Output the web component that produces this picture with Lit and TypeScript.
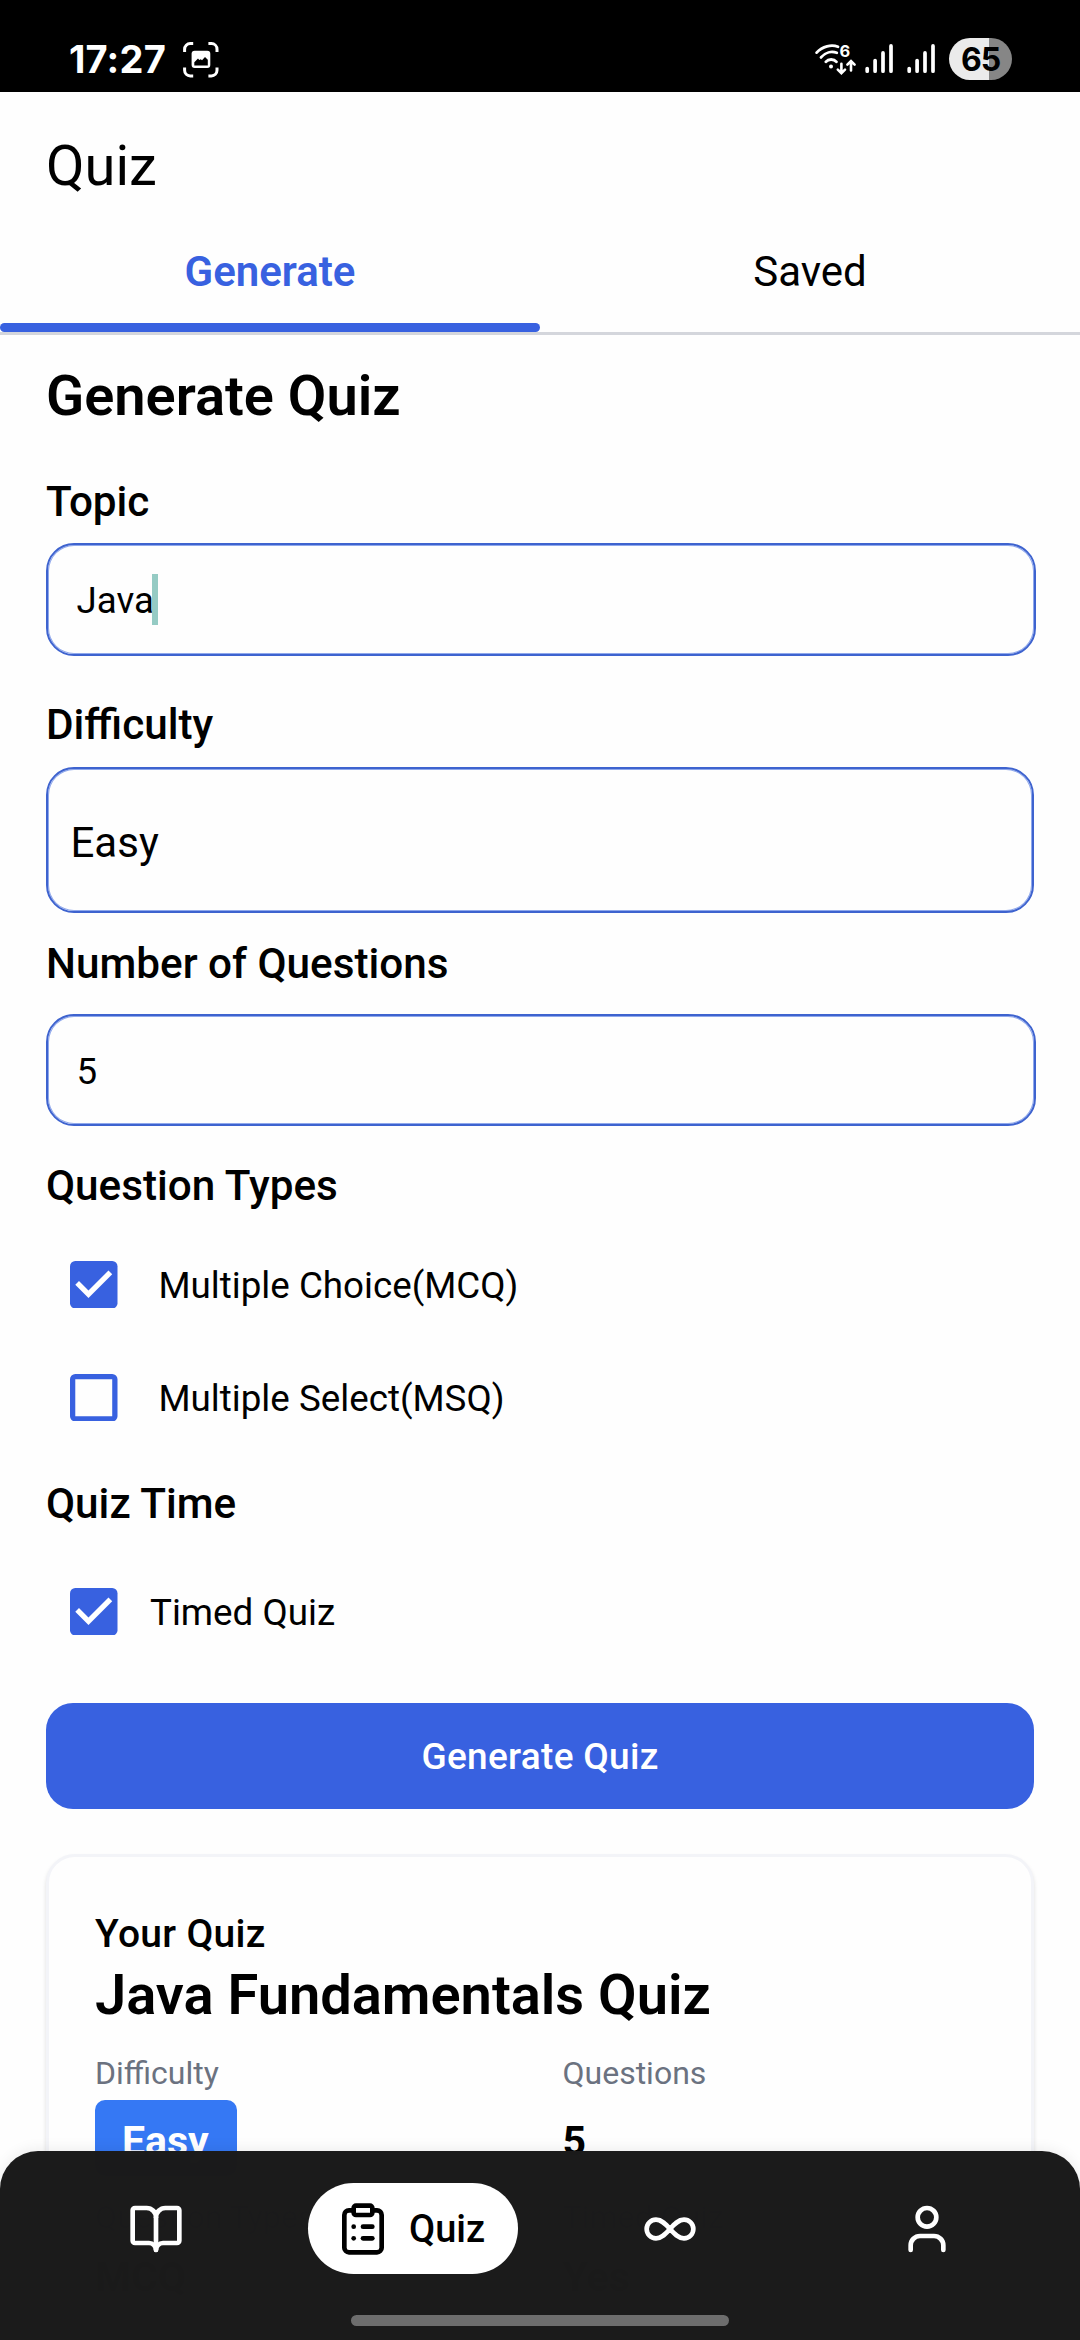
import { LitElement, html, css, svg } from "lit";
import { customElement, property, state } from "lit/decorators.js";
import { classMap } from "lit/directives/class-map.js";

const bookIcon = svg`<path d="M12 7v14"/><path d="M3 18a1 1 0 0 1-1-1V4a1 1 0 0 1 1-1h5a4 4 0 0 1 4 4 4 4 0 0 1 4-4h5a1 1 0 0 1 1 1v13a1 1 0 0 1-1 1h-6a3 3 0 0 0-3 3 3 3 0 0 0-3-3z"/>`;
const clipboardIcon = svg`<rect width="8" height="4" x="8" y="2" rx="1" ry="1"/><path d="M16 4h2a2 2 0 0 1 2 2v14a2 2 0 0 1-2 2H6a2 2 0 0 1-2-2V6a2 2 0 0 1 2-2h2"/><path d="M12 11h4"/><path d="M12 16h4"/><path d="M8 11h.01"/><path d="M8 16h.01"/>`;
const infinityIcon = svg`<path d="M6 16c5 0 7-8 12-8a4 4 0 0 1 0 8c-5 0-7-8-12-8a4 4 0 1 0 0 8"/>`;
const userIcon = svg`<path d="M19 21v-2a4 4 0 0 0-4-4H9a4 4 0 0 0-4 4v2"/><circle cx="12" cy="7" r="4"/>`;

@customElement("status-bar")
class StatusBar extends LitElement {
  static styles = css`
    :host {
      display: flex;
      align-items: flex-start;
      height: 92px;
      box-sizing: border-box;
      padding: 38px 68px 0 69px;
      background: #000;
      color: #fff;
      font-family: Inter, Roboto, sans-serif;
    }
    svg { display: block; flex: none; overflow: visible; }
    .time { font-size: 38px; font-weight: 700; line-height: 42px; width: 114px; letter-spacing: 0.2px; }
    .capture { margin-top: 4px; }
    .wifi { margin: 6px 9px 0 auto; }
    .bars { margin: 6px 14px 0 0; }
    .battery {
      width: 63px;
      height: 42px;
      border-radius: 21px;
      background: linear-gradient(90deg, #ebebeb 40px, #868686 40px);
      color: #000;
      font-size: 32px;
      font-weight: 700;
      line-height: 43px;
      text-align: center;
      letter-spacing: -1px;
    }
  `;

  private bars() {
    return html`<svg class="bars" width="28" height="30" viewBox="0 0 28 30" stroke="#fff" stroke-width="3.7" stroke-linecap="round">
      <path d="M2.2 24.6v2.6M10.1 16.6v10.6M18 8.9v18.3M26 1.9v25.3"/>
    </svg>`;
  }

  render() {
    return html`
      <div class="time">17:27</div>
      <svg class="capture" width="36" height="36" viewBox="0 0 36 36" fill="none">
        <path d="M1.6 10V7.2A5.6 5.6 0 0 1 7.2 1.6h3M25.4 1.6h3a5.6 5.6 0 0 1 5.6 5.6V10M34 25.5v2.8a5.6 5.6 0 0 1-5.6 5.6h-3M10.2 33.9h-3a5.6 5.6 0 0 1-5.6-5.6v-2.8" stroke="#fff" stroke-width="3"/>
        <rect x="8.6" y="8.8" width="18.7" height="17.2" rx="3" fill="#fff"/>
        <path d="M11.3 23.4v-3.2l3.7-3.6 1.3 1.3 1.5-.6 1.2 1 3-3.2 2.8 2.6v5.7z" fill="#000"/>
      </svg>
      <svg class="wifi" width="41" height="31" viewBox="0 0 41 31" fill="none" stroke="#fff" stroke-width="2.8" stroke-linecap="round">
        <path d="M1.6 8.6C7.4 2.2 16.5 0.2 23 2.8"/>
        <path d="M6 13.4C10.2 8.4 16.5 6.8 21.8 8.8"/>
        <path d="M10.8 17.8C13.5 14.7 18.8 14.7 21.5 17.8"/>
        <circle cx="16" cy="22.6" r="2" fill="#fff" stroke="none"/>
        <path d="M26.4 19.8v9M22.8 25.6l3.6 3.6 3.6-3.6M36 26.5v-9M32.4 20.6l3.6-3.6 3.6 3.6" stroke-width="2.6"/>
        <text x="24.4" y="12.8" font-size="16.5" font-weight="700" fill="#fff" stroke="none">6</text>
      </svg>
      ${this.bars()}${this.bars()}
      <div class="battery">65</div>
    `;
  }
}

@customElement("check-row")
class CheckRow extends LitElement {
  @property() label = "";
  @property({ type: Boolean }) checked = false;

  static styles = css`
    :host { display: flex; align-items: center; height: 49px; gap: var(--gap, 41px); padding-left: 24px; }
    svg { display: block; flex: none; }
    .label { font-size: 36.75px; line-height: 48px; padding-top: 2px; white-space: nowrap; }
  `;

  render() {
    return html`
      <svg width="47.5" height="47.5" viewBox="3 3 18 18">
        ${this.checked
          ? svg`<rect x="3" y="3" width="18" height="18" rx="2" fill="#3861e0"/><path d="M10 17l-5-5 1.41-1.41L10 14.17l7.59-7.59L19 8z" fill="#fff"/>`
          : svg`<rect x="4" y="4" width="16" height="16" rx="1" fill="none" stroke="#3861e0" stroke-width="2"/>`}
      </svg>
      <span class="label">${this.label}</span>
    `;
  }
}

@customElement("bottom-nav")
class BottomNav extends LitElement {
  static styles = css`
    :host {
      display: flex;
      flex-direction: column;
      height: 189px;
      box-sizing: border-box;
      padding: 31.5px 24.5px 14px 27.5px;
      background: rgba(26, 26, 26, 0.995);
      border-radius: 38px 38px 0 0;
      box-shadow: 0 -2px 14px rgba(0, 0, 0, 0.07);
      color: #fff;
    }
    .items { display: grid; grid-template-columns: repeat(4, 1fr); height: 92px; }
    .item { display: flex; align-items: center; justify-content: center; }
    .pill {
      display: flex;
      align-items: center;
      height: 91px;
      width: 210px;
      box-sizing: border-box;
      padding-left: 27px;
      gap: 18px;
      border-radius: 46px;
      background: #fff;
      color: #000;
      font-size: 38px;
      font-weight: 500;
    }
    svg { display: block; flex: none; }
    .handle { width: 378px; height: 11px; border-radius: 6px; background: #6d6d6d; margin: auto auto 0 323.5px; }
  `;

  private icon(shape: unknown) {
    return html`<svg width="56" height="56" viewBox="0 0 24 24" fill="none" stroke="currentColor" stroke-width="2" stroke-linecap="round" stroke-linejoin="round">${shape}</svg>`;
  }

  render() {
    return html`
      <div class="items">
        <div class="item">${this.icon(bookIcon)}</div>
        <div class="item"><div class="pill">${this.icon(clipboardIcon)}<span>Quiz</span></div></div>
        <div class="item">${this.icon(infinityIcon)}</div>
        <div class="item">${this.icon(userIcon)}</div>
      </div>
      <div class="handle"></div>
    `;
  }
}

@customElement("app-root")
class AppRoot extends LitElement {
  @state() private tab = "Generate";

  static styles = css`
    :host {
      display: block;
      position: relative;
      width: 1080px;
      height: 2340px;
      overflow: hidden;
      background: #fefefe;
      color: #000;
      font-family: Roboto, sans-serif;
    }
    .title { font-size: 56px; line-height: 66px; padding: 41px 46px 0; }
    .tabs { display: grid; grid-template-columns: 1fr 1fr; height: 136px; box-sizing: border-box; border-bottom: 3px solid #d4d6dc; }
    .tab { display: flex; flex-direction: column; justify-content: space-between; padding-top: 48px; text-align: center; font-size: 42px; line-height: 50px; }
    .tab.active { color: #3861e0; font-weight: 600; }
    .tab.active::after { content: ""; height: 9px; border-radius: 5px; background: #3861e0; }
    .content { padding: 28px 46px 0; }
    .heading { font-size: 56px; line-height: 66px; font-weight: 600; }
    .label { font-size: 42.25px; line-height: 50px; font-weight: 500; }
    .field {
      display: flex;
      align-items: center;
      box-sizing: border-box;
      border: 2px solid #3e63cf;
      box-shadow: inset 0 0 0 1px #8fa8ec;
      border-radius: 28px;
      font-size: 36.7px;
      line-height: 44px;
    }
    .input { width: 990px; padding-left: 28.5px; }
    .input .text { padding-top: 3px; }
    .caret { width: 6px; height: 51px; background: #95cbc4; margin-left: -1.5px; }
    .select { height: 146px; font-size: 42px; padding-left: 22.5px; padding-top: 6px; }
    .topic { margin-top: 48px; }
    .topic-field { height: 113px; margin-top: 16px; }
    .difficulty { margin-top: 44px; }
    .difficulty-field { margin-top: 17px; }
    .count { margin-top: 26px; }
    .count-field { height: 112px; margin-top: 25px; }
    .types { margin-top: 35px; }
    .mcq { margin-top: 49px; }
    .msq { margin-top: 64px; }
    .time { margin-top: 57px; }
    .timed { margin-top: 58px; --gap: 32.5px; }
    .submit {
      display: flex;
      align-items: center;
      justify-content: center;
      height: 106px;
      margin-top: 67px;
      border-radius: 27px;
      background: #3861e0;
      color: #fff;
      font-size: 37px;
      font-weight: 500;
      letter-spacing: 0.3px;
    }
    .card {
      height: 600px;
      box-sizing: border-box;
      margin-top: 45px;
      padding: 53px 46px 0;
      border: 3px solid #f3f4f8;
      border-radius: 29px;
      background: #fefefe;
      box-shadow: 0 3px 4px rgba(0, 0, 0, 0.13);
    }
    .eyebrow { font-size: 39px; line-height: 46px; font-weight: 500; letter-spacing: 0.3px; padding-top: 1px; }
    .name { font-size: 56px; line-height: 66px; font-weight: 600; margin-top: 5px; }
    .facts { display: grid; grid-template-columns: 467.5px 1fr; margin-top: 26px; }
    .fact { display: flex; flex-direction: column; align-items: flex-start; height: 144px; }
    .key { font-size: 32px; line-height: 38px; color: #6b7280; }
    .value { font-size: 41px; line-height: 50px; font-weight: 700; margin-top: 8px; padding-top: 16px; }
    .badge { padding: 16px 28px 10px 27px; border-radius: 10px; background: #3578f4; color: #fff; }
    .low { padding-top: 8px; }
    .nav { position: absolute; left: 0; right: 0; bottom: 0; }
  `;

  private fact(key: string, value: string, kind = "") {
    return html`<div class="fact">
      <span class="key">${key}</span>
      <span class=${classMap({ value: true, badge: kind === "badge", low: kind === "low" })}>${value}</span>
    </div>`;
  }

  render() {
    return html`
      <status-bar></status-bar>
      <div class="title">Quiz</div>
      <div class="tabs">
        ${["Generate", "Saved"].map(
          (t) => html`<div class=${classMap({ tab: true, active: t === this.tab })} @click=${() => (this.tab = t)}>${t}</div>`
        )}
      </div>
      <div class="content">
        <div class="heading">Generate Quiz</div>
        <div class="label topic">Topic</div>
        <div class="field input topic-field"><span class="text">Java</span><span class="caret"></span></div>
        <div class="label difficulty">Difficulty</div>
        <div class="field select difficulty-field">Easy</div>
        <div class="label count">Number of Questions</div>
        <div class="field input count-field"><span class="text">5</span></div>
        <div class="label types">Question Types</div>
        <check-row class="mcq" label="Multiple Choice(MCQ)" checked></check-row>
        <check-row class="msq" label="Multiple Select(MSQ)"></check-row>
        <div class="label time">Quiz Time</div>
        <check-row class="timed" label="Timed Quiz" checked></check-row>
        <div class="submit">Generate Quiz</div>
        <div class="card">
          <div class="eyebrow">Your Quiz</div>
          <div class="name">Java Fundamentals Quiz</div>
          <div class="facts">
            ${this.fact("Difficulty", "Easy", "badge")}${this.fact("Questions", "5")}
            ${this.fact("Question Types", "MCQ", "low")}${this.fact("Timed Quiz", "Yes", "low")}
          </div>
        </div>
      </div>
      <bottom-nav class="nav"></bottom-nav>
    `;
  }
}
